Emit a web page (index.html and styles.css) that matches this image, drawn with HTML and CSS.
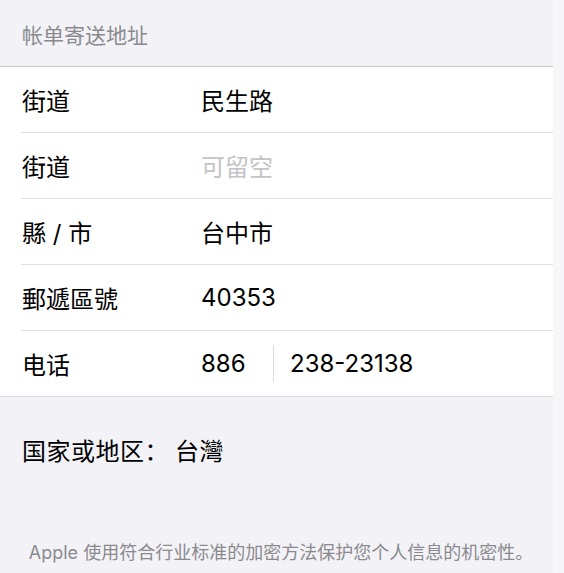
FILE: index.html
```html
<!DOCTYPE html>
<html lang="zh">
<head>
  <meta charset="UTF-8">
  <meta name="viewport" content="width=device-width, initial-scale=1.0">
  <title>帐单寄送地址</title>
  <link rel="stylesheet" href="styles.css">
</head>
<body>
  <div class="page">
    <div class="section-header">帐单寄送地址</div>

    <div class="form-section">
      <div class="form-row">
        <span class="field-label">街道</span>
        <span class="field-value">民生路</span>
      </div>
      <div class="form-row">
        <span class="field-label">街道</span>
        <span class="field-value placeholder">可留空</span>
      </div>
      <div class="form-row">
        <span class="field-label">縣 / 市</span>
        <span class="field-value">台中市</span>
      </div>
      <div class="form-row">
        <span class="field-label">郵遞區號</span>
        <span class="field-value">40353</span>
      </div>
      <div class="form-row">
        <span class="field-label">电话</span>
        <span class="phone-code">886</span>
        <span class="phone-divider"></span>
        <span class="field-value">238-23138</span>
      </div>
    </div>

    <div class="region">国家或地区：<span class="region-name">台灣</span></div>

    <p class="footer-note">Apple 使用符合行业标准的加密方法保护您个人信息的机密性。</p>
  </div>
</body>
</html>
```

FILE: styles.css
```css
body {
  margin: 0;
  padding: 0;
  background-color: #f7f7f9;
  font-family: "Inter", "Noto Sans CJK SC", sans-serif;
  color: #000;
}

.page {
  width: 553px;
  min-height: 573px;
  background-color: #f2f2f7;
}

.section-header {
  height: 64px;
  padding: 2px 22px 0;
  display: flex;
  align-items: center;
  font-size: 21px;
  color: #8a8a8e;
}

.form-section {
  background-color: white;
  border-top: 1px solid #c8c7cc;
  border-bottom: 1px solid #dcdce0;
}

.form-row {
  height: 65px;
  margin-left: 21px;
  display: flex;
  align-items: center;
  border-bottom: 1px solid #e0e0e3;
  font-size: 24px;
}

.form-row:last-child {
  border-bottom: none;
}

.field-label {
  width: 179px;
  padding-left: 1px;
  flex-shrink: 0;
}

.placeholder {
  color: #c4c4c7;
}

.phone-code {
  width: 72px;
}

.phone-divider {
  width: 1px;
  height: 37px;
  background-color: #dcdce0;
  margin-right: 16px;
}

.region {
  padding: 40px 22px 0;
  line-height: 30px;
  font-size: 24px;
  letter-spacing: 0.5px;
}

.region-name {
  margin-left: 6px;
}

.footer-note {
  margin: 74px 0 0;
  padding-left: 9px;
  line-height: 24px;
  text-align: center;
  font-size: 18px;
  color: #8a8a8e;
}
```
